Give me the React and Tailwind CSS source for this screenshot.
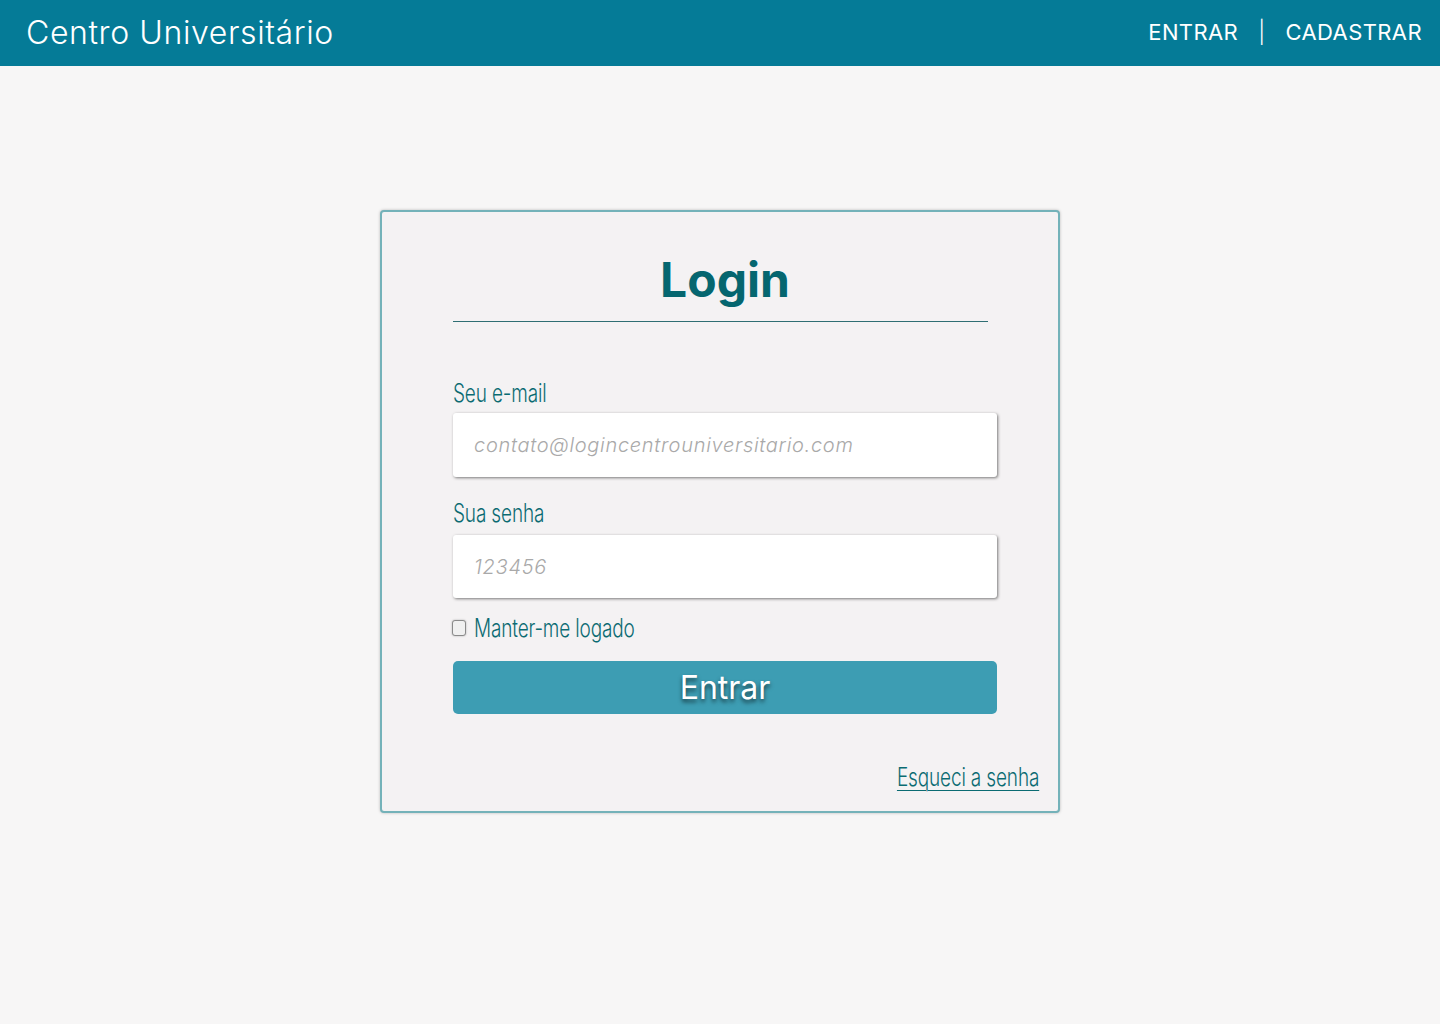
export default function App() {
  const cond = "inline-block scale-x-[0.76] text-[25px] leading-[30px] text-[#0b6b72] font-['Inter',sans-serif] font-light tracking-[-0.2px]";
  return (
    <div className="min-h-[1024px] bg-[#f7f6f6] font-['Inter',sans-serif]">
      <header className="h-[66px] bg-[#057b97] flex items-center justify-between pl-[26px] pr-[18px] text-white">
        <div className="text-[32px] font-light tracking-[0.6px]">Centro Universitário</div>
        <nav className="flex items-center text-[22px] font-normal tracking-[0.4px] pb-[2px]">
          <span>ENTRAR</span>
          <span className="mx-[20px] font-light">|</span>
          <span>CADASTRAR</span>
        </nav>
      </header>
      <main className="flex justify-center pt-[144px]">
        <div className="w-[680px] h-[603px] bg-[#f4f2f3] border-2 border-[#74b2b9] rounded-[4px] shadow-[0_0_3px_rgba(0,0,0,0.25)] pl-[71px] pr-[61px] pt-[36px] flex flex-col">
          <h1 className="text-center text-[48px] font-bold text-[#05666f] leading-[64px]">Login</h1>
          <div className="mt-[9px] mr-[9px] h-px bg-[#2f6e73]" />
          <label className="mt-[56px] h-[30px]"><span className={cond + " origin-left"}>Seu e-mail</span></label>
          <div className="mt-[5px] h-[64px] bg-white rounded-[3px] shadow-[1px_1px_3px_rgba(0,0,0,0.5)] flex items-center pl-[21px] text-[20px] italic font-light tracking-[0.7px] text-[#a9a9a9]">
            contato@logincentrouniversitario.com
          </div>
          <label className="mt-[21px] h-[30px]"><span className={cond + " origin-left"}>Sua senha</span></label>
          <div className="mt-[7px] h-[63px] bg-white rounded-[3px] shadow-[1px_1px_3px_rgba(0,0,0,0.5)] flex items-center pl-[21px] text-[20px] italic font-light tracking-[0.7px] text-[#a9a9a9]">
            123456
          </div>
          <div className="mt-[15px] flex items-center ml-[-1px]">
            <div className="w-[14px] h-[16px] rounded-[3px] border border-[#8a8a8a] bg-[#f0f0f0] shadow-[0_0_2px_rgba(0,0,0,0.3)]" />
            <span className={cond + " ml-[8px] origin-left"}>Manter-me logado</span>
          </div>
          <button className="mt-[18px] h-[53px] bg-[#3d9db3] rounded-[5px] text-white text-[32px] font-normal [text-shadow:0_3px_4px_rgba(0,0,0,0.6)]">
            Entrar
          </button>
          <div className="mt-[48px] mr-[-42px] text-right h-[32px]">
            <span className={cond + " origin-right underline underline-offset-[4px] decoration-1"}>Esqueci a senha</span>
          </div>
        </div>
      </main>
    </div>
  );
}
